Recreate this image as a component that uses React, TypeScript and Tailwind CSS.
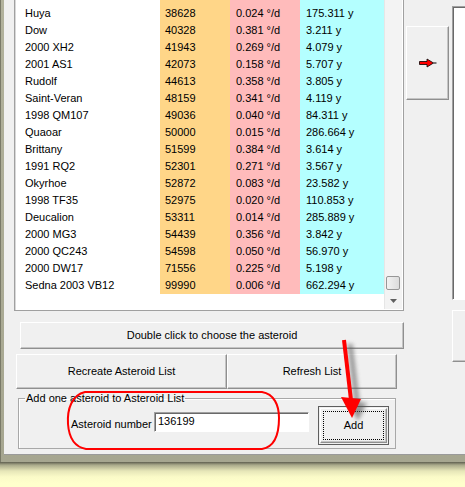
import React from 'react';

interface AsteroidRow {
  name: string;
  num: string;
  motion: string;
  period: string;
}

const rows: AsteroidRow[] = [
  { name: 'Huya', num: '38628', motion: '0.024', period: '175.311' },
  { name: 'Dow', num: '40328', motion: '0.381', period: '3.211' },
  { name: '2000 XH2', num: '41943', motion: '0.269', period: '4.079' },
  { name: '2001 AS1', num: '42073', motion: '0.158', period: '5.707' },
  { name: 'Rudolf', num: '44613', motion: '0.358', period: '3.805' },
  { name: 'Saint-Veran', num: '48159', motion: '0.341', period: '4.119' },
  { name: '1998 QM107', num: '49036', motion: '0.040', period: '84.311' },
  { name: 'Quaoar', num: '50000', motion: '0.015', period: '286.664' },
  { name: 'Brittany', num: '51599', motion: '0.384', period: '3.614' },
  { name: '1991 RQ2', num: '52301', motion: '0.271', period: '3.567' },
  { name: 'Okyrhoe', num: '52872', motion: '0.083', period: '23.582' },
  { name: '1998 TF35', num: '52975', motion: '0.020', period: '110.853' },
  { name: 'Deucalion', num: '53311', motion: '0.014', period: '285.889' },
  { name: '2000 MG3', num: '54439', motion: '0.356', period: '3.842' },
  { name: '2000 QC243', num: '54598', motion: '0.050', period: '56.970' },
  { name: '2000 DW17', num: '71556', motion: '0.225', period: '5.198' },
  { name: 'Sedna 2003 VB12', num: '99990', motion: '0.006', period: '662.294' },
];

// classic raised / sunken 3d edges
const raised =
  'border border-t-white border-l-white border-r-[#8f8f8f] border-b-[#8f8f8f] shadow-[inset_-1px_-1px_0_#c4c4c4]';
const sunken =
  'border border-t-[#a0a0a0] border-l-[#a0a0a0] border-r-white border-b-white shadow-[inset_1px_1px_0_#696969]';

function AsteroidList() {
  return (
    <div className="-mt-[14px] h-[325px] w-[390px] border border-[#a0a0a0] shadow-[inset_1px_1px_0_#d8d8d8] p-px bg-white flex">
      <div className="flex-1 flex flex-col bg-white">
        {/* row scrolled mostly out of view */}
        <div className="flex h-[17px]">
          <div className="w-[144px]" />
          <div className="w-[70px] bg-[#ffd688]" />
          <div className="w-[70px] bg-[#ffbbbb]" />
          <div className="flex-1 bg-[#b4ffff]" />
        </div>
        {rows.map((r) => (
          <div key={r.name} className="flex h-[17px] leading-[17px] whitespace-nowrap">
            <div className="w-[144px] pl-[9px]">{r.name}</div>
            <div className="w-[70px] pl-[5px] bg-[#ffd688]">{r.num}</div>
            <div className="w-[70px] pl-[6px] bg-[#ffbbbb]">{r.motion} °/d</div>
            <div className="flex-1 pl-[6px] bg-[#b4ffff]">{r.period} y</div>
          </div>
        ))}
      </div>
      {/* vertical scrollbar */}
      <div className="w-[18px] flex flex-col bg-[#f3f3f3] border-l border-[#e6e6e6]">
        <div className="flex-1 flex flex-col justify-end pb-[2px] pl-[1px]">
          <div className="h-[14px] w-[14px] rounded-[2px] border border-[#969696] bg-[linear-gradient(to_right,#f2f2f2,#dcdcdc)]" />
        </div>
        <div className="h-[17px] flex items-center justify-center">
          <svg width="7" height="4" viewBox="0 0 7 4">
            <path d="M0 0 H7 L3.5 4 Z" fill="#606060" />
          </svg>
        </div>
      </div>
    </div>
  );
}

function RightArrowGlyph() {
  return (
    <svg width="18" height="10" viewBox="0 0 18 10">
      <polygon
        points="0.5,3.5 8,3.5 8,1 14.5,5 8,9 8,6.5 0.5,6.5"
        fill="#ff0000"
        stroke="#000"
        strokeWidth="0.8"
      />
      <line x1="14.5" y1="5" x2="17.5" y2="5" stroke="#000" strokeWidth="1" />
    </svg>
  );
}

function Annotations() {
  return (
    <svg className="absolute inset-0 pointer-events-none" width="465" height="487" viewBox="0 0 465 487">
      <defs>
        <filter id="soft" x="-50%" y="-50%" width="200%" height="200%">
          <feGaussianBlur stdDeviation="2.2" />
        </filter>
      </defs>
      <path
        d="M85 392 L262 392 C274 394 279 405 279 418 C279 436 274 447 262 449 L86 449 C75 447 69 438 68 424 C67 409 72 395 85 392 Z"
        fill="none"
        stroke="#ff0000"
        strokeWidth="2"
      />
      <g filter="url(#soft)" opacity="0.6">
        <line x1="350" y1="344" x2="357" y2="402" stroke="#555" strokeWidth="5" />
        <polygon points="347,401 367,403 358,421" fill="#555" />
      </g>
      <line x1="344" y1="340" x2="351" y2="400" stroke="#ff0000" strokeWidth="4" />
      <polygon points="341,397 361,399 352,418" fill="#ff0000" />
    </svg>
  );
}

export default function App() {
  return (
    <div className="relative w-[465px] h-[487px] overflow-hidden bg-[#ffffcc] font-['Liberation_Sans',Arial,sans-serif] text-[11px] text-black">
      {/* window frame */}
      <div className="h-[462px] pl-[4px] pb-[7px] bg-[linear-gradient(to_bottom,#b2b29c,#a6a690)] shadow-[inset_1px_0_0_#7a7a68]">
        <div className="h-full w-[470px] bg-[#f0f0f0] border-b border-[#9a9a9a] flex pl-[10px]">
          {/* left column: list and controls */}
          <div className="w-[390px] flex flex-col">
            <AsteroidList />

            <div className={`mt-[11px] ml-[6px] w-[384px] h-[27px] flex items-center justify-center ${raised}`}>
              Double click to choose the asteroid
            </div>

            <div className="mt-[5px] ml-[2px] flex">
              <div className={`w-[211px] h-[35px] flex items-center justify-center ${raised}`}>
                Recreate Asteroid List
              </div>
              <div className={`w-[170px] h-[35px] flex items-center justify-center ${raised}`}>
                Refresh List
              </div>
            </div>

            <fieldset className="mt-[3px] ml-[4px] w-[378px] h-[57px] border border-[#a8a8a8] shadow-[inset_1px_1px_0_#fff]">
              <legend className="ml-[6px] px-[1px] leading-[12px]">Add one asteroid to Asteroid List</legend>
              <div className="flex items-start pl-[52px] pt-[2px]">
                <div className="w-[83px] mt-[12px] leading-[13px] whitespace-nowrap">Asteroid number</div>
                <div className={`mt-[6px] w-[155px] h-[20px] bg-white pl-[3px] leading-[17px] ${sunken}`}>136199</div>
                <div className="ml-[9px] w-[71px] h-[39px] border border-[#5e5e5e] bg-[#f0f0f0] p-px">
                  <div className={`h-full w-full flex items-center justify-center p-[2px] ${raised}`}>
                    <div className="h-full w-full border border-dotted border-black flex items-center justify-center">
                      Add
                    </div>
                  </div>
                </div>
              </div>
            </fieldset>
          </div>

          {/* right column A */}
          <div className="ml-[2px] w-[43px] shrink-0">
            <div className={`mt-[26px] h-[74px] flex items-center justify-center ${raised}`}>
              <RightArrowGlyph />
            </div>
          </div>

          {/* right column B (cut by the window edge) */}
          <div className="ml-[3px] w-[40px] shrink-0 flex flex-col">
            <div className={`mt-[6px] h-[294px] bg-white ${sunken}`} />
            <div className={`mt-[10px] h-[52px] ${raised}`} />
          </div>
        </div>
      </div>
      {/* drop shadow of the window on the desktop */}
      <div className="h-[25px] bg-[linear-gradient(to_bottom,#5f5f50,#a9a98a_3px,#e6e6b8_9px,#fbfbc8_15px,#ffffcc_22px)]" />
      <Annotations />
    </div>
  );
}
